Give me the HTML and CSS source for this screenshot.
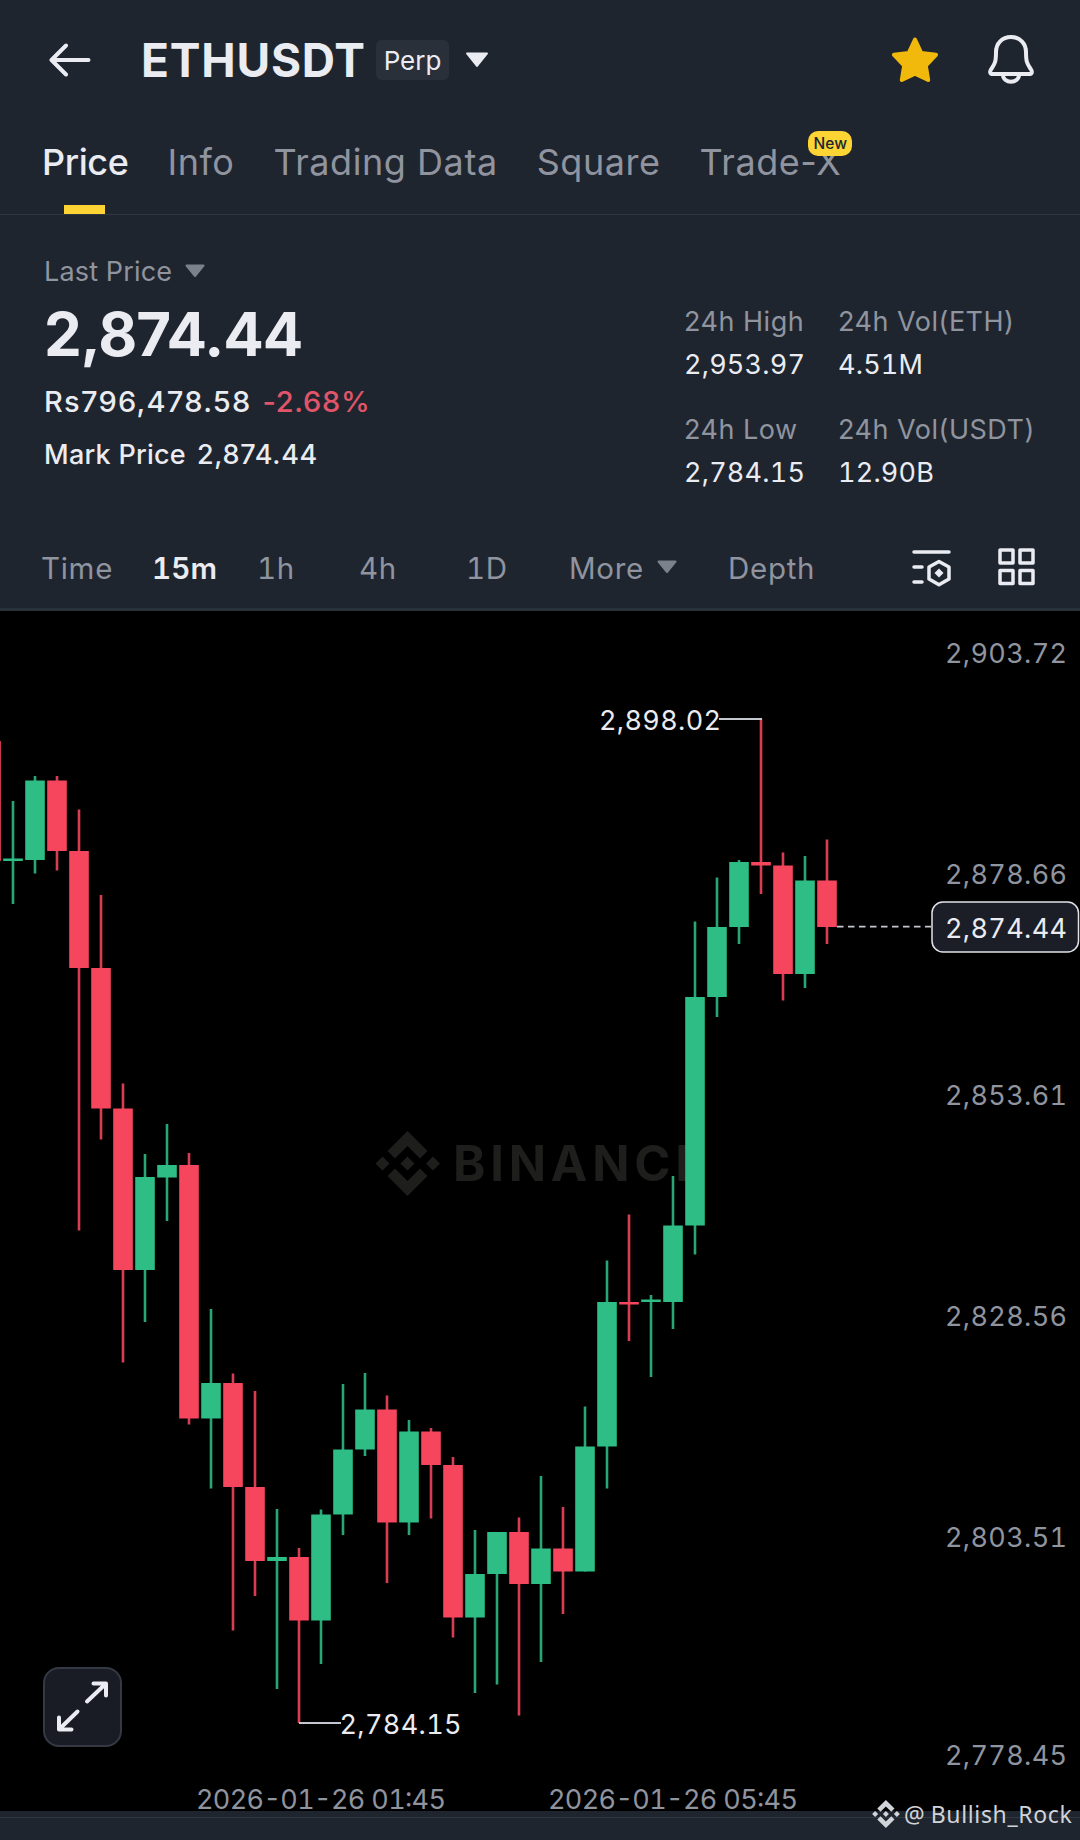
FILE: index.html
```html
<!DOCTYPE html>
<html lang="en">
<head>
  <meta charset="UTF-8" />
  <title>ETHUSDT Perp</title>
  <link rel="stylesheet" href="styles.css">
</head>
<body>
  <header class="topbar">
    <svg class="back" width="42" height="34" viewBox="0 0 42 34">
      <path d="M39.5 17H3M17 2.5L2.5 17L17 31.5" />
    </svg>
    <h1>ETHUSDT</h1>
    <span class="perp">Perp</span>
    <svg class="caret-lg" width="24" height="16" viewBox="0 0 24 16">
      <path d="M2 1.5H22L12 14Z" />
    </svg>
    <svg class="star" width="48" height="46" viewBox="0 0 48 46">
      <path d="M24 2.5L30.3 16L45 17.8L34.8 28.6L37.2 43L24 36.8L10.8 43L13.2 28.6L3 17.8L17.7 16Z" />
    </svg>
    <svg class="bell" width="46" height="50" viewBox="0 0 46 50">
      <path d="M23 3C14 3 8 9.5 8 18C8 29 6.5 30 3 35.5C1.5 38 2 40 5 40H41C44 40 44.5 38 43 35.5C39.5 30 38 29 38 18C38 9.5 32 3 23 3Z" />
      <path d="M15 40.5C15 50 31 50 31 40.5" />
    </svg>
  </header>

  <nav class="tabs">
    <a class="active">Price</a>
    <a>Info</a>
    <a>Trading Data</a>
    <a>Square</a>
    <a>Trade-X<span class="new">New</span></a>
  </nav>

  <section class="summary">
    <div class="price">
      <div class="label">Last Price
        <svg class="caret" width="20" height="14" viewBox="0 0 20 14"><path d="M1.5 1.5H18.5L10 12Z" /></svg>
      </div>
      <div class="last">2,874.44</div>
      <div class="fiat"><span>Rs796,478.58</span><span class="down">-2.68%</span></div>
      <div class="mark"><span>Mark Price</span><span class="mark-value">2,874.44</span></div>
    </div>
    <div class="stats">
      <div class="stat"><span>24h High</span><b>2,953.97</b></div>
      <div class="stat"><span>24h Vol(ETH)</span><b>4.51M</b></div>
      <div class="stat"><span>24h Low</span><b>2,784.15</b></div>
      <div class="stat"><span>24h Vol(USDT)</span><b>12.90B</b></div>
    </div>
  </section>

  <div class="intervals">
    <span>Time</span>
    <span class="active">15m</span>
    <span>1h</span>
    <span>4h</span>
    <span>1D</span>
    <span>More
      <svg class="caret" width="20" height="14" viewBox="0 0 20 14"><path d="M1.5 1.5H18.5L10 12Z" /></svg>
    </span>
    <span>Depth</span>
    <svg class="tool" width="40" height="38" viewBox="0 0 40 38">
      <path d="M2 3H37M2 18H10M2 33H10" />
      <path d="M27 12.5L37 18V30L27 35.8L17 30V18Z" />
      <path class="solid" d="M27 19.5L31.5 24L27 28.5L22.5 24Z" />
    </svg>
    <svg class="tool" width="38" height="40" viewBox="0 0 38 40">
      <path d="M2 2H15V15H2ZM22 2H35V15H22ZM2 22.5H15V35.5H2ZM22 22.5H35V35.5H22Z" />
    </svg>
  </div>

  <main class="chart">
    <svg id="chart" width="1080" height="1200" viewBox="0 611 1080 1200">
      <defs>
        <g id="logo">
          <path d="M32 0L52 20L44.5 27.5L32 15L19.5 27.5L12 20Z" />
          <path d="M32 65L52 45L44.5 37.5L32 50L19.5 37.5L12 45Z" />
          <path d="M7 25.5L14 32.5L7 39.5L0 32.5ZM57.5 25.5L64.5 32.5L57.5 39.5L50.5 32.5ZM32 25.5L39 32.5L32 39.5L25 32.5Z" />
        </g>
      </defs>

      <g class="watermark">
        <use href="#logo" x="375.5" y="1131" />
        <text x="453" y="1181" textLength="252">BINANCE</text>
      </g>

      <g id="candles"></g>

      <g class="axis">
        <text x="945" y="663" textLength="122">2,903.72</text>
        <text x="945" y="884" textLength="122">2,878.66</text>
        <text x="945" y="1105" textLength="122">2,853.61</text>
        <text x="945" y="1326" textLength="122">2,828.56</text>
        <text x="945" y="1547" textLength="122">2,803.51</text>
        <text x="945" y="1765" textLength="122">2,778.45</text>
        <text x="196" y="1809" textLength="250">2026-01-26 01:45</text>
        <text x="548" y="1809" textLength="250">2026-01-26 05:45</text>
      </g>

      <g class="marks">
        <path d="M719 719H762M299 1723H341" />
        <path class="dash" d="M837 926.7H931" />
        <text x="599" y="730" textLength="122">2,898.02</text>
        <text x="339.5" y="1734" textLength="122">2,784.15</text>
      </g>

      <g class="current">
        <rect x="932" y="902" width="146.5" height="50" rx="11" />
        <text x="945" y="938" textLength="122">2,874.44</text>
      </g>
    </svg>

    <button class="expand">
      <svg width="54" height="54" viewBox="0 0 54 54">
        <path d="M31 21.5L49.5 4M37.5 3.5H50V15.5M21.5 31.5L3.5 49M3 37.5V49.5H15.5" />
      </svg>
    </button>
  </main>

  <footer class="footer">
    <div class="credit">
      <svg width="28" height="28" viewBox="0 0 64.5 65"><use href="#logo" /></svg>
      <span>@</span><span class="author">Bullish_Rock</span>
    </div>
  </footer>

  <script>
    // color, high, body top, body bottom, low
    const candles = [
      ["r", 741, 741, 861, 861],
      ["g", 801, 858.5, 861, 904],
      ["g", 776, 780.5, 860, 873.5],
      ["r", 776, 780.5, 851, 870.5],
      ["r", 809.5, 851, 968, 1230.5],
      ["r", 895, 968, 1108.5, 1139.5],
      ["r", 1083.5, 1108.5, 1270, 1362.5],
      ["g", 1154, 1177, 1270, 1322],
      ["g", 1124, 1165, 1177.5, 1221],
      ["r", 1153, 1165, 1418.5, 1424.5],
      ["g", 1309, 1383, 1418.5, 1488.5],
      ["r", 1373.5, 1383, 1487, 1630.5],
      ["r", 1391, 1487, 1561, 1596],
      ["g", 1509, 1557, 1561, 1689],
      ["r", 1548, 1557, 1620.5, 1723],
      ["g", 1509.5, 1514.5, 1620.5, 1664],
      ["g", 1384, 1449.5, 1514.5, 1535],
      ["g", 1373, 1409.5, 1449.5, 1456],
      ["r", 1395.5, 1409.5, 1522.5, 1583],
      ["g", 1420, 1431.5, 1522.5, 1535],
      ["r", 1428, 1431.5, 1465, 1518.5],
      ["r", 1457, 1465, 1617.5, 1637.5],
      ["g", 1530, 1574, 1617.5, 1693],
      ["g", 1532, 1532, 1574, 1684.5],
      ["r", 1517.5, 1532, 1584, 1715.5],
      ["g", 1476, 1548.5, 1584, 1662],
      ["r", 1507, 1548.5, 1571.5, 1614],
      ["g", 1406.5, 1446.5, 1571.5, 1571.5],
      ["g", 1260.5, 1302, 1446.5, 1488.5],
      ["r", 1214.5, 1302, 1304.5, 1341],
      ["g", 1295, 1299.5, 1302, 1377],
      ["g", 1176, 1225.5, 1302, 1329],
      ["g", 921.5, 997, 1225.5, 1254.5],
      ["g", 877.5, 927, 997, 1017],
      ["g", 860, 862, 927, 944],
      ["r", 719, 862, 865.5, 894],
      ["r", 852.5, 865.5, 974, 1000.5],
      ["g", 856, 880.5, 974, 988],
      ["r", 839.5, 880.5, 927, 944]
    ];

    const step = 22;
    document.getElementById("candles").innerHTML = candles.map(([color, high, top, bottom, low], i) => {
      const x = i * step - 9;
      return `<g class="${color}">
        <rect class="wick" x="${x - 1.3}" y="${high}" width="2.6" height="${low - high}" />
        <rect x="${x - 9.8}" y="${top}" width="19.6" height="${bottom - top}" />
      </g>`;
    }).join("");
  </script>
</body>
</html>
```
FILE: styles.css
```css
:root {
  --bg: #1f252f;
  --text: #eaecf2;
  --muted: #8f949f;
  --green: #2ebd85;
  --red: #f6465d;
  --yellow: #fcd535;
}

* {
  box-sizing: border-box;
}

body {
  margin: 0;
  width: 1080px;
  height: 1840px;
  overflow: hidden;
  background-color: var(--bg);
  color: var(--text);
  font-family: Inter, "Liberation Sans", sans-serif;
  white-space: nowrap;
}

svg {
  display: block;
  flex: none;
}

.topbar {
  display: flex;
  align-items: center;
  height: 120px;
  padding-left: 49px;
}

.back,
.bell {
  fill: none;
  stroke: var(--text);
  stroke-width: 4;
  stroke-linecap: round;
  stroke-linejoin: round;
}

h1 {
  margin: 0 0 0 50px;
  width: 235px;
  font-size: 46px;
  font-weight: 700;
  line-height: 61px;
  letter-spacing: 0.8px;
}

.perp {
  width: 73px;
  height: 40px;
  border-radius: 6px;
  background-color: #2a303a;
  font-size: 26px;
  line-height: 42px;
  text-align: center;
}

.caret-lg {
  margin-left: 16px;
  fill: var(--text);
  stroke: var(--text);
  stroke-width: 2;
  stroke-linejoin: round;
}

.star {
  margin: -1px 0 0 402px;
  fill: #f0b90b;
  stroke: #f0b90b;
  stroke-width: 4;
  stroke-linejoin: round;
}

.bell {
  margin: -2px 0 0 49px;
}

.tabs {
  display: flex;
  gap: 39px;
  height: 95px;
  padding-left: 42px;
  border-bottom: 1px solid #313640;
  font-size: 36px;
  line-height: 84px;
  letter-spacing: 0.55px;
  color: var(--muted);
}

.tabs a {
  position: relative;
}

.tabs .active {
  color: var(--text);
  font-weight: 500;
  letter-spacing: -0.4px;
}

.tabs .active::after {
  content: "";
  position: absolute;
  left: 22px;
  bottom: 0;
  width: 41px;
  height: 9px;
  background-color: var(--yellow);
}

.new {
  position: absolute;
  top: 11px;
  right: -11px;
  width: 44px;
  height: 25px;
  border-radius: 10px;
  background-color: var(--yellow);
  color: #202630;
  font-size: 15.5px;
  font-weight: 500;
  line-height: 26px;
  letter-spacing: 0;
  text-align: center;
}

.summary {
  display: flex;
  justify-content: space-between;
  height: 308px;
  padding: 38px 35px 0 44px;
}

.label {
  display: flex;
  align-items: center;
  gap: 13px;
  font-size: 27px;
  line-height: 38px;
  letter-spacing: 0.15px;
  color: var(--muted);
}

.caret {
  margin-top: -2px;
  fill: #7c818b;
  stroke: #7c818b;
  stroke-width: 2;
  stroke-linejoin: round;
}

.last {
  font-size: 60px;
  font-weight: 700;
  line-height: 86px;
  letter-spacing: -1px;
}

.fiat {
  display: flex;
  gap: 11px;
  font-size: 29px;
  font-weight: 500;
  line-height: 50px;
  letter-spacing: 1.25px;
}

.down {
  color: #e0556a;
  letter-spacing: 0.7px;
}

.mark {
  display: flex;
  gap: 11px;
  font-size: 27px;
  font-weight: 500;
  line-height: 56px;
  letter-spacing: 0.25px;
}

.mark-value {
  letter-spacing: 0.7px;
}

.stats {
  display: grid;
  grid-template-columns: 154px 207px;
  grid-auto-rows: 108px;
  padding-top: 47px;
}

.stat {
  display: flex;
  flex-direction: column;
  font-size: 27px;
  line-height: 43px;
  letter-spacing: 0.5px;
}

.stat span {
  color: var(--muted);
}

.stat b {
  font-weight: 400;
  font-variant-numeric: tabular-nums;
  letter-spacing: 0.2px;
}

.intervals {
  display: grid;
  grid-template-columns: 111px 105px 102px 107px 103px 159px 184px 86px 40px;
  align-items: center;
  height: 88px;
  padding: 5px 0 0 41px;
  border-bottom: 3px solid #29313b;
  font-size: 29.5px;
  line-height: 40px;
  letter-spacing: 0.7px;
  font-variant-numeric: tabular-nums;
  color: var(--muted);
}

.intervals span {
  display: flex;
  align-items: center;
  gap: 13px;
}

.intervals .active {
  color: var(--text);
  font-weight: 600;
  letter-spacing: 0.2px;
}

.tool {
  fill: none;
  stroke: var(--text);
  stroke-width: 3.5;
  stroke-linecap: round;
  stroke-linejoin: round;
}

.tool .solid {
  fill: var(--text);
  stroke: none;
}

.chart {
  position: relative;
  height: 1200px;
  background-color: #000;
}

.chart > svg {
  overflow: visible;
}

.chart text {
  font-size: 27px;
  font-variant-numeric: tabular-nums;
}

.r {
  fill: var(--red);
}

.g {
  fill: var(--green);
}

.wick {
  opacity: 0.88;
}

.watermark {
  fill: #1e1e1d;
}

.chart .watermark text {
  font-size: 49px;
  font-weight: 700;
}

.axis {
  fill: var(--muted);
}

.marks path {
  stroke: #c4c8ce;
  stroke-width: 1.8;
}

.marks .dash {
  stroke-dasharray: 6.5 4.5;
}

.marks text,
.current text {
  fill: var(--text);
}

.current rect {
  fill: #1b1e27;
  stroke: #e1e3e8;
  stroke-width: 1.5;
}

.expand {
  position: absolute;
  left: 43px;
  top: 1056px;
  display: flex;
  align-items: center;
  justify-content: center;
  width: 79px;
  height: 80px;
  padding: 0;
  border: 2px solid #343943;
  border-radius: 16px;
  background-color: #191c25;
}

.expand path {
  fill: none;
  stroke: var(--text);
  stroke-width: 4;
  stroke-linecap: round;
  stroke-linejoin: round;
}

.footer {
  height: 29px;
  background: linear-gradient(#313640, #313640) 0 6px / 100% 1px no-repeat;
}

.credit {
  position: relative;
  top: -12px;
  display: flex;
  align-items: center;
  margin-left: 872px;
  height: 30px;
  color: #d0d3d8;
  fill: #d0d3d8;
  font-family: "Noto Sans", sans-serif;
  font-size: 23px;
  line-height: 30px;
}

.credit span {
  margin-left: 4px;
}

.credit .author {
  margin-left: 6px;
  letter-spacing: 0.65px;
}
```
